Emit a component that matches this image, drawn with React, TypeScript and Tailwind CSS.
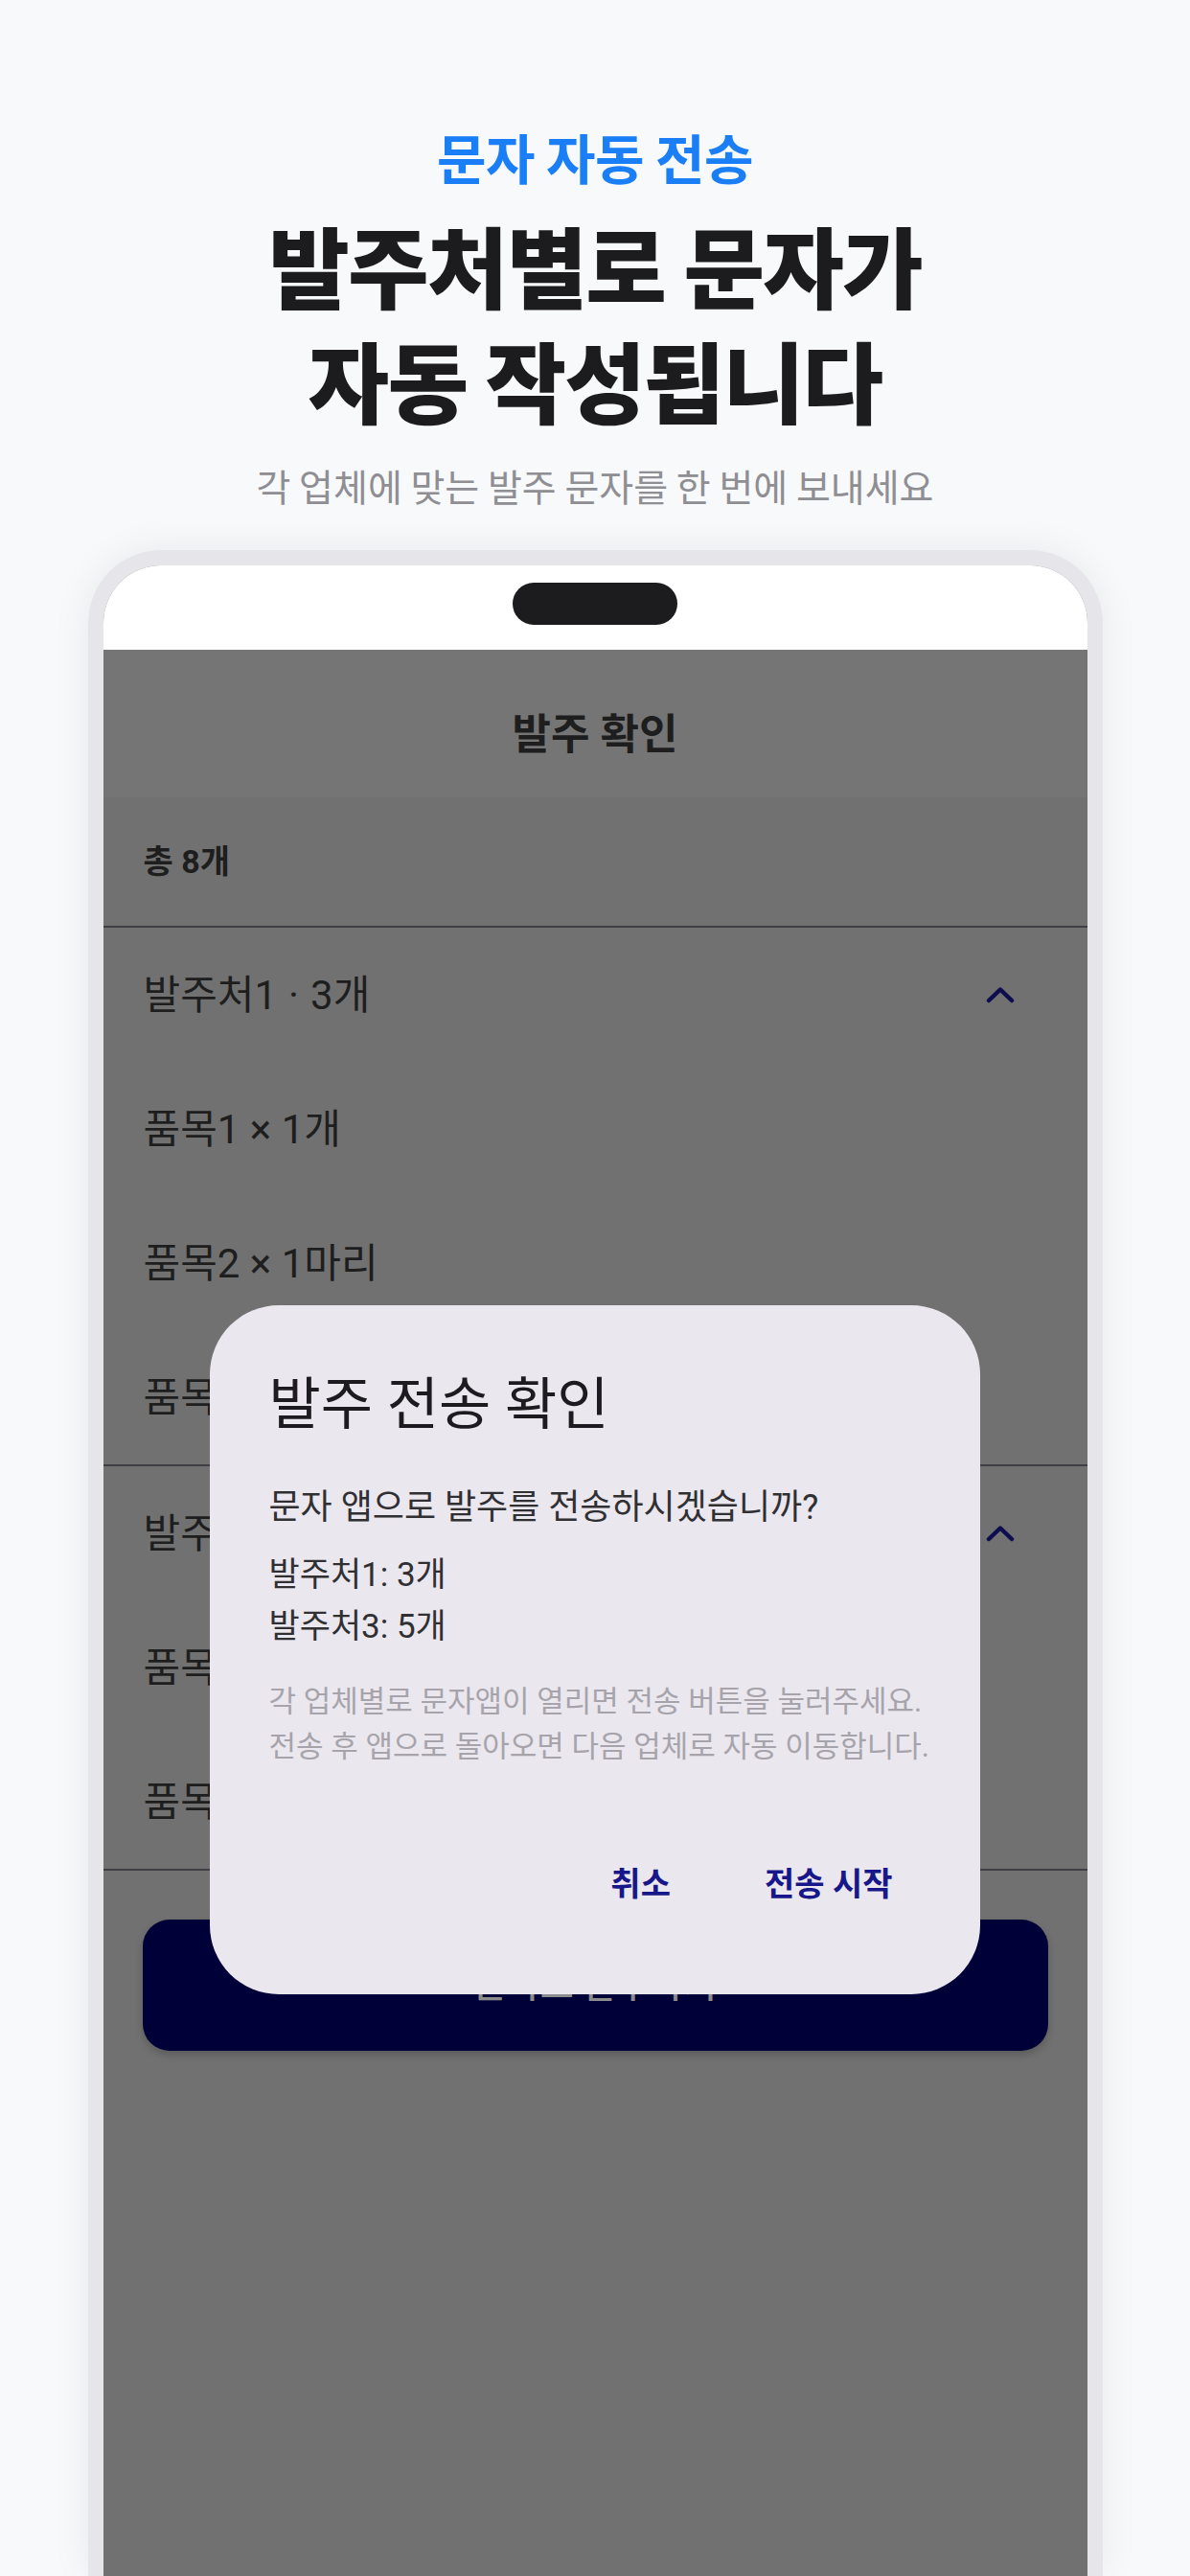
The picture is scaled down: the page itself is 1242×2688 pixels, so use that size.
import React from 'react';

const phoneFont = { fontFamily: 'Roboto, "Noto Sans CJK KR", sans-serif' };
const headFont = { fontFamily: '"Noto Sans CJK KR", "Noto Sans", sans-serif' };

type Group = { name: string; count: number; items: string[] };

const groups: Group[] = [
  { name: '발주처1', count: 3, items: ['품목1 × 1개', '품목2 × 1마리', '품목3 × 1개'] },
  { name: '발주처3', count: 5, items: ['품목4 × 2개', '품목5 × 3개'] },
];

const ChevronUp = () => (
  <svg width="30" height="18" viewBox="0 0 30 18" fill="none">
    <polyline
      points="3,15 15,3.5 27,15"
      stroke="#0e0e4e"
      strokeWidth="4.5"
      strokeLinecap="round"
      strokeLinejoin="round"
    />
  </svg>
);

const ConfirmDialog: React.FC = () => (
  <div className="absolute left-[111px] top-[772px] w-[804px] h-[719px] rounded-[72px] bg-[#ebe7ef] pl-[62px]">
    <h2 className="pt-[69px] text-[59px] leading-[70px] text-[#1d1b20]">발주 전송 확인</h2>
    <p className="mt-[48px] text-[36px] leading-[48px] text-[#303033]">문자 앱으로 발주를 전송하시겠습니까?</p>
    <div className="mt-[20px] text-[35px] leading-[54px] text-[#303033]">
      <p>발주처1: 3개</p>
      <p>발주처3: 5개</p>
    </div>
    <div className="mt-[27px] text-[31px] leading-[47px] text-[#a6a4aa]">
      <p>각 업체별로 문자앱이 열리면 전송 버튼을 눌러주세요.</p>
      <p>전송 후 앱으로 돌아오면 다음 업체로 자동 이동합니다.</p>
    </div>
    <div className="mt-[96px] flex justify-end gap-[98px] pr-[91px] text-[34px] leading-[48px] font-semibold text-[#17178a]">
      <button>취소</button>
      <button>전송 시작</button>
    </div>
  </div>
);

const App: React.FC = () => {
  return (
    <div className="w-[1242px] h-[2688px] overflow-hidden bg-[#f8f9fb] flex flex-col items-center">
      <div className="pt-[131px] flex flex-col items-center" style={headFont}>
        <p className="text-[56px] leading-[64px] font-bold tracking-[-0.01em] text-[#1a7ef6]">문자 자동 전송</p>
        <h1 className="mt-[20px] text-[92px] leading-[120px] font-extrabold tracking-[-0.02em] text-[#1c1c1e] text-center">
          발주처별로 문자가
          <br />
          자동 작성됩니다
        </h1>
        <p className="mt-[27px] text-[39px] leading-[48px] text-[#8e8e93]">각 업체에 맞는 발주 문자를 한 번에 보내세요</p>
      </div>

      <div className="mt-[44px] w-[1059px] flex-1 rounded-t-[76px] border-[16px] border-b-0 border-[#e6e5ea] shadow-[0_0_40px_rgba(0,0,0,0.07)]">
        <div className="relative h-full rounded-t-[60px] overflow-hidden bg-[#717171]" style={phoneFont}>
          <div className="h-[88px] bg-white flex justify-center pt-[18px]">
            <div className="w-[172px] h-[44px] rounded-full bg-[#1c1c1e]" />
          </div>

          <div className="h-[154px] bg-[#757575] flex items-center justify-center pt-[24px]">
            <span className="text-[44px] font-semibold text-[#1e1e1e]">발주 확인</span>
          </div>

          <div className="h-[134px] flex items-center pl-[42px] text-[34px] font-bold text-[#1e1e1e]">총 8개</div>

          {groups.map(group => (
            <div key={group.name} className="border-t-2 border-[#3e3e44]">
              <div className="h-[140px] flex items-center justify-between pl-[42px] pr-[76px]">
                <span className="text-[42px] text-[#1e1e1e]">
                  {group.name}
                  <span className="mx-[12px]">·</span>
                  {group.count}개
                </span>
                <ChevronUp />
              </div>
              {group.items.map(item => (
                <div key={item} className="h-[140px] flex items-center pl-[42px] text-[42px] text-[#1e1e1e]">
                  {item}
                </div>
              ))}
            </div>
          ))}

          <div className="border-t-2 border-[#3e3e44] px-[41px] pt-[51px]">
            <div className="h-[137px] rounded-[28px] bg-[#000038] shadow-[0_4px_8px_rgba(0,0,0,0.2)] flex items-center justify-center">
              <span className="text-[38px] font-medium text-[#8c8c8c]">문자로 발주하기</span>
            </div>
          </div>

          <ConfirmDialog />
        </div>
      </div>
    </div>
  );
};

export default App;
